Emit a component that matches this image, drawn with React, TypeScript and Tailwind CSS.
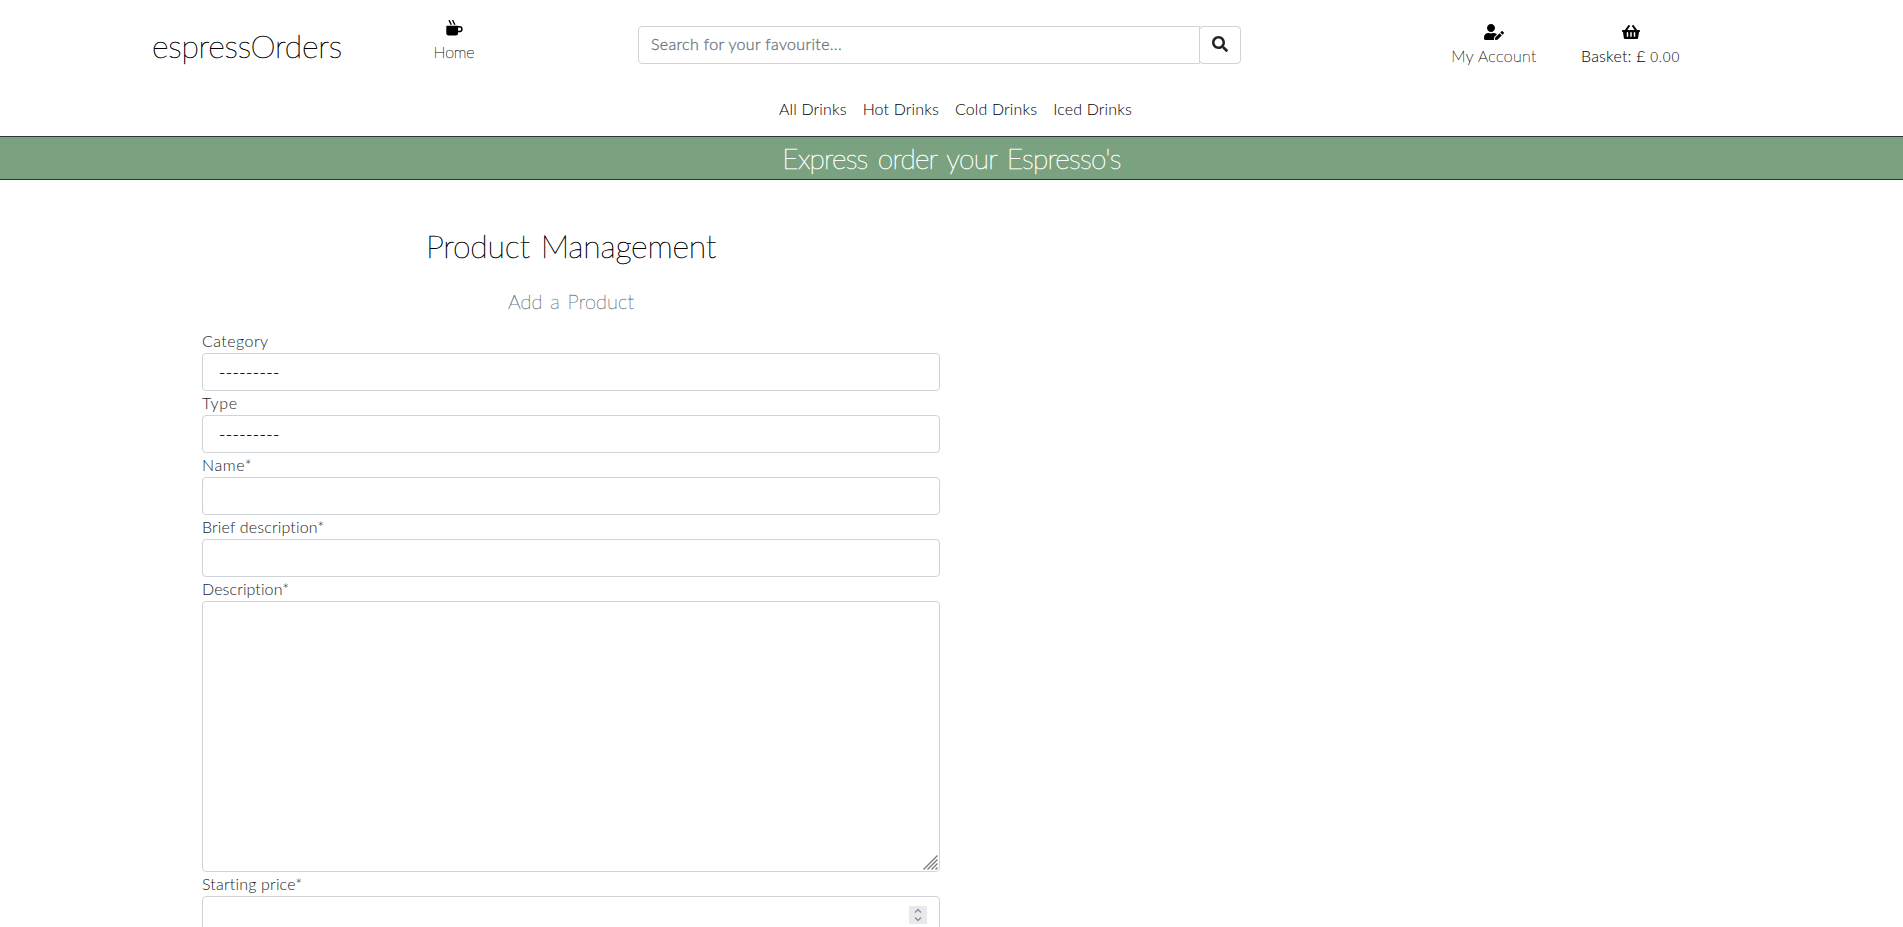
import { FaSearch, FaShoppingBasket, FaUserEdit } from "react-icons/fa";
import type { ReactNode } from "react";

const display = "font-['Lato',sans-serif] font-thin";
const body = "font-['Lato',sans-serif] font-light";
const control = "block w-full rounded-[4px] border border-[#ced4da] bg-white";

function MugIcon() {
  return (
    <svg viewBox="0 0 17 17" className="h-[17px] w-[17px]" fill="none" aria-hidden="true">
      <path d="M.3 6.6q0-.8.8-.8h11v7.2a2.5 2.5 0 0 1-2.5 2.5H2.8A2.5 2.5 0 0 1 .3 13z" fill="#000" />
      <path d="M11.8 6.8h1.7a2.4 2.4 0 0 1 0 4.8h-1.7" stroke="#000" strokeWidth="1.5" />
      <path d="M3 .2 5.3 4.7M6.6.2l2.3 4.5" stroke="#000" strokeWidth="1.4" />
    </svg>
  );
}

function Field({ label, spacing, children }: { label: string; spacing: string; children: ReactNode }) {
  return (
    <div>
      <label className={`block h-6 whitespace-nowrap text-base leading-6 text-[#212529] ${body} ${spacing}`}>{label}</label>
      {children}
    </div>
  );
}

function EmptySelect() {
  return (
    <div className={`${control} flex h-[38px] items-center pl-[16px] pt-px font-['Inter',sans-serif] text-[14px] font-light tracking-[0.4px] text-black`}>
      ---------
    </div>
  );
}

export default function App() {
  return (
    <div className="h-[927px] w-full overflow-hidden bg-white text-[#212529]">
      <header className="flex h-[136px] flex-col">
        <div className="flex h-[94px] items-start">
          <a className={`ml-[152px] mt-[24px] w-[230px] whitespace-nowrap text-[32px] leading-[44px] tracking-[-0.22px] text-black [-webkit-text-stroke:0.5px_#000] ${display}`}>espressOrders</a>
          <a className="mt-5 flex w-[144px] flex-col items-center">
            <MugIcon />
            <span className={`mt-[3px] whitespace-nowrap text-base leading-6 tracking-[-0.15px] text-black [-webkit-text-stroke:0.25px_#000] ${display}`}>Home</span>
          </a>
          <div className="ml-[112px] mt-[26px] flex h-[38px] w-[603px]">
            <div className="flex flex-1 items-center rounded-l-[4px] border border-[#ced4da] pb-0.5 pl-3 font-['Lato',sans-serif] text-base font-light tracking-[0.33px] text-[#6c757d] [-webkit-text-stroke:0.3px_#6c757d]">
              Search for your favourite...
            </div>
            <button className="-ml-px flex w-[42px] items-center justify-center rounded-[4px] border border-[#ced4da] pb-0.5">
              <FaSearch className="size-4" />
            </button>
          </div>
          <a className="ml-[183px] mt-6 flex w-[140px] flex-col items-center">
            <FaUserEdit className="h-4 w-5 text-black" />
            <span className={`mt-1 whitespace-nowrap text-base leading-6 tracking-[0.4px] text-black [-webkit-text-stroke:0.25px_#000] ${display}`}>My Account</span>
          </a>
          <a className="mt-6 flex w-[133px] flex-col items-center">
            <FaShoppingBasket className="h-4 w-[18px] text-black" />
            <span className={`mt-1 whitespace-nowrap text-base leading-6 tracking-[0.2px] text-black ${body}`}>
              Basket: £ <span className="text-[13.5px] tracking-[0.8px]">0.00</span>
            </span>
          </a>
        </div>
        <nav className={`ml-[779px] mt-[3px] flex gap-4 whitespace-nowrap text-base leading-6 tracking-[0.14px] text-black ${body}`}>
          <a>All Drinks</a>
          <a>Hot Drinks</a>
          <a>Cold Drinks</a>
          <a>Iced Drinks</a>
        </nav>
      </header>
      <div className="flex h-11 items-center justify-center border-y border-[#2f343a] bg-[#7ba280]">
        <h4 className={`whitespace-nowrap text-[28px] leading-[34px] tracking-[-0.75px] text-white [word-spacing:3px] [-webkit-text-stroke:0.6px_#fff] ${display}`}>Express order your Espresso's</h4>
      </div>
      <main className="ml-[202px] w-[738px]">
        <h2 className={`mt-[47px] text-center text-[32px] leading-[38px] tracking-[-0.2px] text-black [word-spacing:2px] [-webkit-text-stroke:0.5px_#000] ${display}`}>Product Management</h2>
        <h5 className={`mt-[24px] text-center text-[20px] leading-6 tracking-[0.1px] text-[#6c757d] [word-spacing:2px] [-webkit-text-stroke:0.35px_#6c757d] ${display}`}>Add a Product</h5>
        <form className="mt-4">
          <Field label="Category" spacing="tracking-[0.45px]"><EmptySelect /></Field>
          <Field label="Type" spacing="tracking-[0.7px]"><EmptySelect /></Field>
          <Field label="Name*" spacing="tracking-[0.6px]"><input className={`${control} h-[38px]`} /></Field>
          <Field label="Brief description*" spacing="tracking-[0.15px]"><input className={`${control} h-[38px]`} /></Field>
          <Field label="Description*" spacing="tracking-[0.1px]">
            <div className={`${control} flex h-[271px] items-end justify-end p-px`}>
              <svg viewBox="0 0 15 15" className="size-[15px]" stroke="#777" strokeWidth="1.3" aria-hidden="true">
                <path d="M.5 14.5l14-14M4.5 14.5l10-10M8.5 14.5l6-6M12.5 14.5l2-2" />
              </svg>
            </div>
          </Field>
          <Field label="Starting price*" spacing="tracking-[0.18px]">
            <div className={`${control} flex h-[38px] items-center justify-end pr-3`}>
              <span className="flex h-[18px] w-[18px] items-center justify-center bg-[#e9e9ed]">
                <svg viewBox="0 0 18 18" className="size-[18px]" fill="none" stroke="#8f8f9d" strokeWidth="1.5" aria-hidden="true">
                  <path d="M6 6.5l3-3 3 3M6 11.5l3 3 3-3" />
                </svg>
              </span>
            </div>
          </Field>
        </form>
      </main>
    </div>
  );
}
